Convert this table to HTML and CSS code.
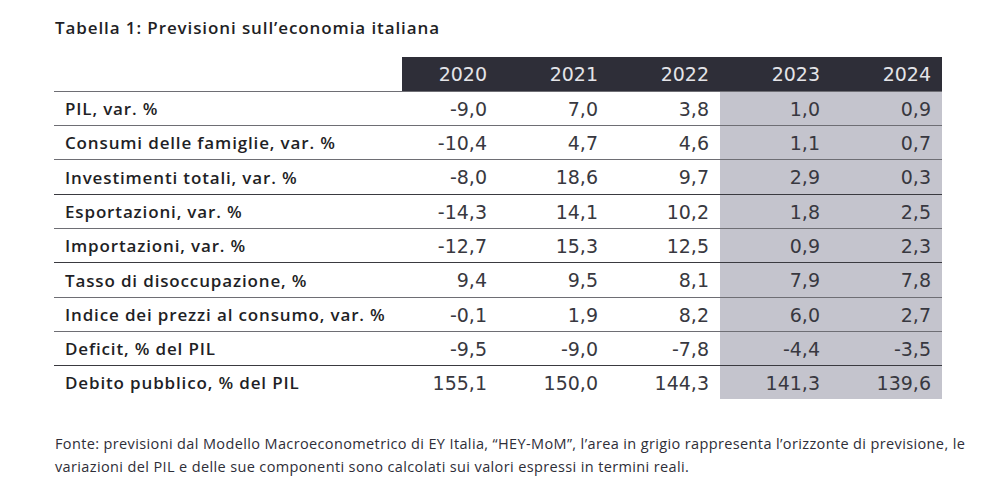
FILE: index.html
```html
<!DOCTYPE html>
<html lang="it">
<head>
<meta charset="utf-8">
<title>Tabella 1: Previsioni sull’economia italiana</title>
<link rel="stylesheet" href="styles.css">
</head>
<body>
<div class="page">
  <h1 class="title">Tabella 1: Previsioni sull’economia italiana</h1>
  <div class="table">
    <div class="row head">
      <div class="label"></div>
      <div class="num">2020</div>
      <div class="num">2021</div>
      <div class="num">2022</div>
      <div class="num">2023</div>
      <div class="num">2024</div>
    </div>
    <div class="row">
      <div class="label">PIL, var. %</div>
      <div class="num">-9,0</div><div class="num">7,0</div><div class="num">3,8</div><div class="num fc">1,0</div><div class="num fc">0,9</div>
    </div>
    <div class="row">
      <div class="label">Consumi delle famiglie, var. %</div>
      <div class="num">-10,4</div><div class="num">4,7</div><div class="num">4,6</div><div class="num fc">1,1</div><div class="num fc">0,7</div>
    </div>
    <div class="row tall">
      <div class="label">Investimenti totali, var. %</div>
      <div class="num">-8,0</div><div class="num">18,6</div><div class="num">9,7</div><div class="num fc">2,9</div><div class="num fc">0,3</div>
    </div>
    <div class="row dark">
      <div class="label">Esportazioni, var. %</div>
      <div class="num">-14,3</div><div class="num">14,1</div><div class="num">10,2</div><div class="num fc">1,8</div><div class="num fc">2,5</div>
    </div>
    <div class="row">
      <div class="label">Importazioni, var. %</div>
      <div class="num">-12,7</div><div class="num">15,3</div><div class="num">12,5</div><div class="num fc">0,9</div><div class="num fc">2,3</div>
    </div>
    <div class="row tall dark">
      <div class="label">Tasso di disoccupazione, %</div>
      <div class="num">9,4</div><div class="num">9,5</div><div class="num">8,1</div><div class="num fc">7,9</div><div class="num fc">7,8</div>
    </div>
    <div class="row">
      <div class="label">Indice dei prezzi al consumo, var. %</div>
      <div class="num">-0,1</div><div class="num">1,9</div><div class="num">8,2</div><div class="num fc">6,0</div><div class="num fc">2,7</div>
    </div>
    <div class="row">
      <div class="label">Deficit, % del PIL</div>
      <div class="num">-9,5</div><div class="num">-9,0</div><div class="num">-7,8</div><div class="num fc">-4,4</div><div class="num fc">-3,5</div>
    </div>
    <div class="row dark">
      <div class="label">Debito pubblico, % del PIL</div>
      <div class="num">155,1</div><div class="num">150,0</div><div class="num">144,3</div><div class="num fc">141,3</div><div class="num fc">139,6</div>
    </div>
  </div>
  <p class="note">Fonte: previsioni dal Modello Macroeconometrico di EY Italia, “HEY-MoM”, l’area in grigio rappresenta l’orizzonte di previsione, le variazioni del PIL e delle sue componenti sono calcolati sui valori espressi in termini reali.</p>
</div>
</body>
</html>
```

FILE: styles.css
```css
html, body {
  margin: 0;
  padding: 0;
  background: #ffffff;
}

.page {
  padding: 16px 0 0 54px;
  width: 930px;
  color: #2e2e38;
}

.title {
  margin: 0 0 17px 1px;
  font-family: "Open Sans", "Liberation Sans", sans-serif;
  font-weight: 600;
  font-size: 17px;
  letter-spacing: 0.9px;
  line-height: 24px;
  color: #1f1f26;
}

.table {
  width: 888px;
}

.row {
  display: grid;
  grid-template-columns: 348px 96px 111px 111px 111px 111px;
  height: 34px;
  box-sizing: border-box;
  border-top: 1px solid #6e6e74;
}

.row.tall {
  height: 35px;
}

.row.dark {
  border-top-color: #3a3a40;
}

.row.head {
  border-top: none;
}

.row.head .num {
  background: #2e2e38;
  color: #e4e4e8;
}

.label {
  display: flex;
  align-items: center;
  padding-left: 11px;
  font-family: "Open Sans", "Liberation Sans", sans-serif;
  font-weight: 600;
  font-size: 17px;
  letter-spacing: 0.85px;
  color: #1f1f26;
}

.num {
  display: flex;
  align-items: center;
  justify-content: flex-end;
  padding-right: 11px;
  font-family: "DejaVu Sans", Verdana, sans-serif;
  font-size: 19px;
  color: #383840;
}

.num.fc {
  background: #c4c4cd;
}

.note {
  margin: 33px 0 0 1px;
  font-family: "Open Sans", "Liberation Sans", sans-serif;
  font-size: 14.5px;
  letter-spacing: 0.37px;
  line-height: 23px;
  color: #2e2e38;
  width: 925px;
}
```
